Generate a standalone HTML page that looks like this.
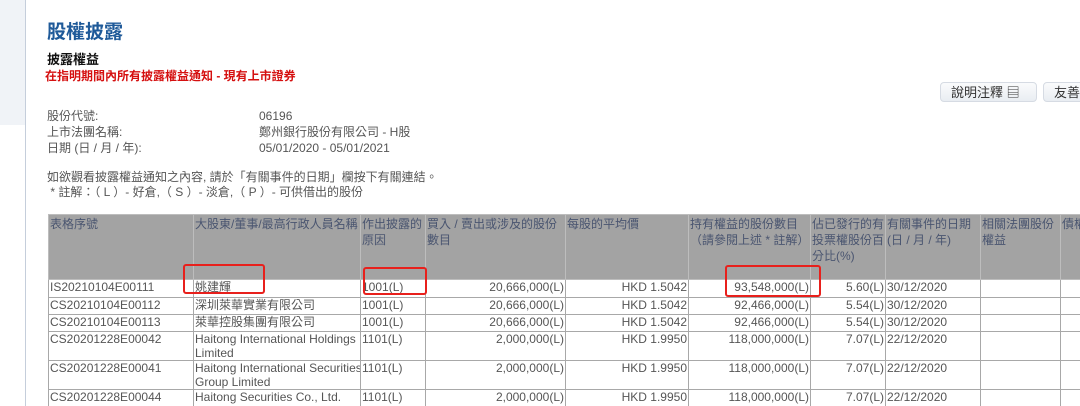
<!DOCTYPE html>
<html><head><meta charset="utf-8"><style>
html,body{margin:0;width:1080px;height:406px;overflow:hidden}
body{background:#fff;font-family:"Liberation Sans","Noto Sans CJK TC",sans-serif;position:relative;color:#555}
.side{position:absolute;left:0;top:0;width:25px;height:125px;background:#f0f3f7}
.vl{position:absolute;left:25px;top:0;width:1px;height:406px;background:#c5cedb}
.a{position:absolute;white-space:nowrap}
.btn{position:absolute;top:82px;height:20px;border:1px solid #d6dbe3;border-radius:4px;background:linear-gradient(#fafbfc,#e9edf2);font-size:13px;color:#333;line-height:20px;padding-left:10px;box-sizing:border-box}
table{position:absolute;left:48px;top:214px;border-collapse:collapse;font-size:12px;color:#555;table-layout:fixed;width:1052px}
td{border:1px solid #a8a8a8;padding:0 1px;vertical-align:top;line-height:14px;overflow:hidden;white-space:nowrap}
th{background:#a3a3a3;border:1px solid #bdbdbd;font-weight:normal;text-align:left;vertical-align:top;padding:1px 1px;line-height:16px;color:#4a5570;height:62px;white-space:normal;overflow:hidden}
td.r{text-align:right}
.box{position:absolute;border:2.5px solid #e8201c;border-radius:3px}
</style></head><body>
<div class="side"></div><div class="vl"></div>
<div class="a" style="left:47px;top:17px;font-size:19px;font-weight:bold;color:#1f5a99">股權披露</div>
<div class="a" style="left:47px;top:49px;font-size:13px;font-weight:bold;color:#111">披露權益</div>
<div class="a" style="left:45px;top:67px;font-size:12px;font-weight:bold;color:#d51010">在指明期間內所有披露權益通知 - 現有上市證券</div>
<div class="a" style="left:47px;top:108px;font-size:12px;line-height:16px">股份代號:<br>上市法團名稱:<br>日期 (日 / 月 / 年):</div>
<div class="a" style="left:259px;top:108px;font-size:12px;line-height:16px">06196<br>鄭州銀行股份有限公司 - H股<br>05/01/2020 - 05/01/2021</div>
<div class="a" style="left:47px;top:170px;font-size:12px;line-height:15px">如欲觀看披露權益通知之內容, 請於「有關事件的日期」欄按下有關連結。<br>&nbsp;* 註解：（ L ）- 好倉,（ S ）- 淡倉,（ P ）- 可供借出的股份</div>
<div class="btn" style="left:940px;width:97px">說明注釋 ▤</div>
<div class="btn" style="left:1043px;width:60px">友善</div>
<table>
<colgroup><col style="width:145px"><col style="width:167px"><col style="width:65px"><col style="width:140px"><col style="width:123px"><col style="width:122px"><col style="width:75px"><col style="width:95px"><col style="width:80px"><col style="width:40px"></colgroup>
<tr><th>表格序號</th><th>大股東/董事/最高行政人員名稱</th><th>作出披露的原因</th><th>買入 / 賣出或涉及的股份數目</th><th>每股的平均價</th><th>持有權益的股份數目（請參閱上述 * 註解）</th><th>佔已發行的有投票權股份百分比(%)</th><th>有關事件的日期 (日 / 月 / 年)</th><th>相關法團股份權益</th><th>債權</th></tr>
<tr style="height:18px"><td>IS20210104E00111</td><td>姚建輝</td><td>1001(L)</td><td class="r">20,666,000(L)</td><td class="r">HKD 1.5042</td><td class="r">93,548,000(L)</td><td class="r">5.60(L)</td><td>30/12/2020</td><td></td><td></td></tr>
<tr style="height:17px"><td>CS20210104E00112</td><td>深圳萊華實業有限公司</td><td>1001(L)</td><td class="r">20,666,000(L)</td><td class="r">HKD 1.5042</td><td class="r">92,466,000(L)</td><td class="r">5.54(L)</td><td>30/12/2020</td><td></td><td></td></tr>
<tr style="height:17px"><td>CS20210104E00113</td><td>萊華控股集團有限公司</td><td>1001(L)</td><td class="r">20,666,000(L)</td><td class="r">HKD 1.5042</td><td class="r">92,466,000(L)</td><td class="r">5.54(L)</td><td>30/12/2020</td><td></td><td></td></tr>
<tr style="height:29px"><td>CS20201228E00042</td><td>Haitong International Holdings<br>Limited</td><td>1101(L)</td><td class="r">2,000,000(L)</td><td class="r">HKD 1.9950</td><td class="r">118,000,000(L)</td><td class="r">7.07(L)</td><td>22/12/2020</td><td></td><td></td></tr>
<tr style="height:29px"><td>CS20201228E00041</td><td>Haitong International Securities<br>Group Limited</td><td>1101(L)</td><td class="r">2,000,000(L)</td><td class="r">HKD 1.9950</td><td class="r">118,000,000(L)</td><td class="r">7.07(L)</td><td>22/12/2020</td><td></td><td></td></tr>
<tr style="height:17px"><td>CS20201228E00044</td><td>Haitong Securities Co., Ltd.</td><td>1101(L)</td><td class="r">2,000,000(L)</td><td class="r">HKD 1.9950</td><td class="r">118,000,000(L)</td><td class="r">7.07(L)</td><td>22/12/2020</td><td></td><td></td></tr>
<tr style="height:17px"><td></td><td></td><td></td><td></td><td></td><td></td><td></td><td></td><td></td><td></td></tr>
</table>
<div class="box" style="left:183px;top:264px;width:78px;height:26px"></div>
<div class="box" style="left:363px;top:267px;width:60px;height:24px"></div>
<div class="box" style="left:725px;top:265px;width:92px;height:28px"></div>
</body></html>
